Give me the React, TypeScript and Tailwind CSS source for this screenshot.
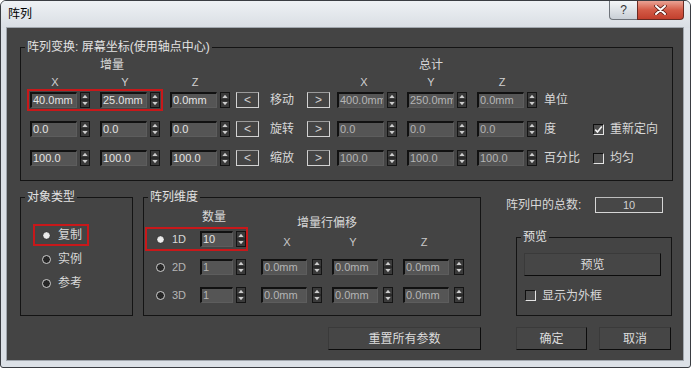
import React from "react";

const INP =
  "h-[16px] bg-[#555555] border-t-2 border-l-2 border-b border-r border-t-[#111111] border-l-[#111111] border-b-[#5d5d5d] border-r-[#5d5d5d] text-[11px] leading-[13px] pl-[1px] overflow-hidden whitespace-nowrap";

function Spinner({ cls = "" }: { cls?: string }) {
  return (
    <svg className={`shrink-0 ${cls}`} width="10" height="16" viewBox="0 0 10 16">
      <rect x="0.5" y="0.5" width="9" height="15" fill="#3a3a3a" stroke="#141414" />
      <line x1="1" y1="8" x2="9" y2="8" stroke="#1a1a1a" />
      <path d="M5 2.8 L7.6 6 L2.4 6 Z" fill="#cdcdcd" />
      <path d="M5 13.2 L7.6 10 L2.4 10 Z" fill="#cdcdcd" />
    </svg>
  );
}

function Field({
  v,
  w = "w-[47px]",
  gap = "ml-[3px]",
  dim = false,
  cls = "",
}: {
  v: string;
  w?: string;
  gap?: string;
  dim?: boolean;
  cls?: string;
}) {
  return (
    <div className={`flex items-center shrink-0 ${cls}`}>
      <div className={`${INP} ${w} ${dim ? "text-[#b4b4b4]" : "text-[#e4e4e4]"}`}>{v}</div>
      <Spinner cls={gap} />
    </div>
  );
}

function Radio({ on }: { on: boolean }) {
  return (
    <svg className="shrink-0" width="9" height="9" viewBox="0 0 9 9">
      {on ? (
        <>
          <circle cx="4.5" cy="4.5" r="4" fill="#cfcfcf" stroke="#262626" />
          <circle cx="4.5" cy="4.5" r="2.6" fill="#ececec" />
        </>
      ) : (
        <circle cx="4.5" cy="4.5" r="4" fill="#262626" stroke="#cfcfcf" />
      )}
    </svg>
  );
}

function Check({ on }: { on: boolean }) {
  return (
    <div className="w-[11px] h-[11px] shrink-0 bg-[#4e4e4e] border border-t-[#0f0f0f] border-l-[#0f0f0f] border-b-[#e4e4e4] border-r-[#e4e4e4] flex items-center justify-center">
      {on && (
        <svg width="9" height="9" viewBox="0 0 9 9">
          <path d="M1.2 4.6 L3.5 7 L7.8 1.6" fill="none" stroke="#f0f0f0" strokeWidth="1.6" />
        </svg>
      )}
    </div>
  );
}

function ArrowBtn({ t }: { t: string }) {
  return (
    <div className="h-[16px] w-[23px] shrink-0 border border-[#d2d2d2] border-t-[#9a9a9a] text-[12px] leading-none text-[#d0d0d0] flex items-center justify-center">
      {t}
    </div>
  );
}

const LEG = "ml-[4px] px-[2px] text-[12px] leading-[14px] text-[#e2e2e2]";
const BTN =
  "h-[23px] bg-[#464646] border border-t-[#3a3a3a] border-l-[#3a3a3a] border-b-[#0c0c0c] border-r-[#0c0c0c] text-[12px] text-[#dcdcdc] flex items-center justify-center shrink-0";

const rows = [
  {
    inc: ["40.0mm", "25.0mm", "0.0mm"],
    label: "移动",
    tot: ["400.0mm", "250.0mm", "0.0mm"],
    unit: "单位",
    red: true,
    cb: null as null | { on: boolean; t: string },
  },
  {
    inc: ["0.0", "0.0", "0.0"],
    label: "旋转",
    tot: ["0.0", "0.0", "0.0"],
    unit: "度",
    red: false,
    cb: { on: true, t: "重新定向" },
  },
  {
    inc: ["100.0", "100.0", "100.0"],
    label: "缩放",
    tot: ["100.0", "100.0", "100.0"],
    unit: "百分比",
    red: false,
    cb: { on: false, t: "均匀" },
  },
];

export default function App() {
  return (
    <div className="w-[691px] h-[368px] bg-[#dce1e7] border border-[#3a3d42] rounded-t-[6px] rounded-b-[3px] flex flex-col overflow-hidden font-['Liberation_Sans','Noto_Sans_CJK_SC',sans-serif] select-none">
      {/* Title bar */}
      <div className="h-[27px] shrink-0 flex items-start justify-between bg-gradient-to-b from-[#eef1f4] to-[#d9dee4]">
        <div className="mt-[6px] pl-[7px] text-[12px] leading-[14px] text-black">阵列</div>
        <div className="flex mr-[6px]">
          <div className="w-[28px] h-[19px] border border-r-0 border-t-0 border-[#6f747b] rounded-bl-[4px] bg-gradient-to-b from-[#f4f6f8] to-[#c9cfd6] flex items-center justify-center text-[12px] text-[#333] leading-none">
            ?
          </div>
          <div className="w-[47px] h-[19px] border border-t-0 border-[#6a2a22] rounded-br-[4px] bg-gradient-to-b from-[#e9a294] via-[#d35a46] to-[#c23f2d] flex items-center justify-center">
            <svg width="13" height="10" viewBox="0 0 13 10">
              <path d="M2 1 L11 9 M11 1 L2 9" stroke="#5a1f18" strokeWidth="3.6" strokeLinecap="round" />
              <path d="M2 1 L11 9 M11 1 L2 9" stroke="#ffffff" strokeWidth="2" strokeLinecap="round" />
            </svg>
          </div>
        </div>
      </div>

      {/* Content */}
      <div className="ml-[6px] w-[676px] h-[332px] bg-[#444444] shadow-[0_0_0_1px_#a1a7ae] flex flex-col text-[#d8d8d8]">
        {/* Top group */}
        <fieldset className="mt-[12px] ml-[13px] w-[653px] h-[141px] border border-[#141414]">
          <legend className={LEG}>阵列变换: 屏幕坐标(使用轴点中心)</legend>
          <div className="flex flex-col">
            <div className="mt-[4px] h-[14px] flex text-[12px] leading-[14px]">
              <div className="w-[182px] text-center">增量</div>
              <div className="w-[456px] text-center">总计</div>
            </div>
            <div className="mt-[3px] h-[14px] flex text-[11px] leading-[14px] text-[#d0d0d0]">
              <div className="w-[68px] text-center">X</div>
              <div className="w-[72px] text-center">Y</div>
              <div className="w-[68px] text-center">Z</div>
              <div className="w-[101px]" />
              <div className="w-[68px] text-center">X</div>
              <div className="w-[66px] text-center">Y</div>
              <div className="w-[76px] text-center">Z</div>
            </div>
            {rows.map((r, i) => (
              <div key={i} className={`h-[22px] flex items-center ${i > 0 ? "mt-[7px]" : ""}`}>
                <div
                  className={`ml-[6px] w-[136px] h-[22px] border-2 flex items-center pl-[1px] shrink-0 ${
                    r.red ? "border-[#c8181a]" : "border-transparent"
                  }`}
                >
                  <Field v={r.inc[0]} />
                  <Field v={r.inc[1]} cls="ml-[10px]" />
                </div>
                <Field v={r.inc[2]} cls="ml-[7px]" />
                <div className="ml-[6px]">
                  <ArrowBtn t="<" />
                </div>
                <div className="ml-[11px] w-[37px] text-[12px] leading-[14px] shrink-0">{r.label}</div>
                <ArrowBtn t=">" />
                <Field v={r.tot[0]} dim cls="ml-[7px]" />
                <Field v={r.tot[1]} dim cls="ml-[10px]" />
                <Field v={r.tot[2]} dim cls="ml-[10px]" />
                <div className="ml-[7px] w-[49px] text-[12px] leading-[14px] shrink-0">{r.unit}</div>
                {r.cb && (
                  <div className="flex items-center">
                    <Check on={r.cb.on} />
                    <div className="ml-[6px] text-[12px] leading-[14px]">{r.cb.t}</div>
                  </div>
                )}
              </div>
            ))}
          </div>
        </fieldset>

        {/* Bottom groups */}
        <div className="mt-[9px] ml-[13px] flex items-start">
          {/* Object type */}
          <fieldset className="w-[113px] h-[126px] border border-[#141414] shrink-0">
            <legend className={LEG}>对象类型</legend>
            <div className="mt-[20px] ml-[12px] flex flex-col gap-[2px]">
              {[
                ["复制", true],
                ["实例", false],
                ["参考", false],
              ].map(([t, on], i) => (
                <div
                  key={i}
                  className={`w-[56px] h-[22px] border-2 flex items-center pl-[7px] ${
                    i === 0 ? "border-[#c8181a]" : "border-transparent"
                  }`}
                >
                  <Radio on={on as boolean} />
                  <div className="ml-[7px] text-[12px] leading-[14px]">{t as string}</div>
                </div>
              ))}
            </div>
          </fieldset>

          {/* Array dimensions */}
          <fieldset className="ml-[10px] w-[338px] h-[126px] border border-[#141414] shrink-0">
            <legend className={LEG}>阵列维度</legend>
            <div className="flex items-start">
              <div className="ml-[1px] w-[103px] flex flex-col shrink-0">
                <div className="mt-[6px] h-[14px] pl-[57px] text-[12px] leading-[14px]">数量</div>
                {[
                  ["1D", "10", true],
                  ["2D", "1", false],
                  ["3D", "1", false],
                ].map(([d, n, on], i) => (
                  <div
                    key={i}
                    className={`h-[24px] w-[103px] border-2 flex items-center pl-[9px] ${
                      i === 0 ? "mt-[3px] border-[#c8181a]" : "mt-[4px] border-transparent"
                    }`}
                  >
                    <Radio on={on as boolean} />
                    <div
                      className={`ml-[7px] w-[28px] text-[11px] leading-[14px] shrink-0 ${
                        on ? "text-[#d8d8d8]" : "text-[#b5b5b5]"
                      }`}
                    >
                      {d as string}
                    </div>
                    <Field v={n as string} w="w-[33px]" dim={!on} />
                  </div>
                ))}
              </div>
              <div className="ml-[13px] flex flex-col">
                <div className="mt-[12px] h-[14px] pl-[36px] text-[12px] leading-[14px]">增量行偏移</div>
                <div className="mt-[5px] h-[14px] flex text-[11px] leading-[14px] text-[#c8c8c8]">
                  <div className="w-[52px] text-center">X</div>
                  <div className="w-[80px] text-center">Y</div>
                  <div className="w-[62px] text-center">Z</div>
                </div>
                {[0, 1].map((i) => (
                  <div key={i} className={`h-[24px] flex items-center ${i === 0 ? "mt-[6px]" : "mt-[4px]"}`}>
                    <Field v="0.0mm" w="w-[46px]" gap="ml-[5px]" dim />
                    <Field v="0.0mm" w="w-[46px]" gap="ml-[5px]" dim cls="ml-[10px]" />
                    <Field v="0.0mm" w="w-[46px]" gap="ml-[5px]" dim cls="ml-[10px]" />
                  </div>
                ))}
              </div>
            </div>
          </fieldset>

          {/* Right column */}
          <div className="ml-[25px] mt-[7px] flex flex-col">
            <div className="h-[16px] flex items-center">
              <div className="w-[89px] text-[12px] leading-[14px]">阵列中的总数:</div>
              <div className="w-[68px] h-[16px] bg-[#474747] border border-[#d6d6d6] border-t-[#bdbdbd] text-[11px] leading-[14px] text-[#d0d0d0] text-center">
                10
              </div>
            </div>
            <fieldset className="mt-[17px] ml-[10px] w-[156px] h-[86px] border border-[#141414]">
              <legend className={LEG}>预览</legend>
              <div className="flex flex-col">
                <div className={`${BTN} mt-[9px] ml-[7px] w-[137px]`}>预览</div>
                <div className="mt-[13px] ml-[8px] h-[13px] flex items-center">
                  <Check on={false} />
                  <div className="ml-[6px] text-[12px] leading-[14px]">显示为外框</div>
                </div>
              </div>
            </fieldset>
          </div>
        </div>

        {/* Bottom buttons */}
        <div className="mt-[11px] pl-[321px] flex">
          <div className={`${BTN} w-[153px]`}>重置所有参数</div>
          <div className={`${BTN} ml-[35px] w-[71px]`}>确定</div>
          <div className={`${BTN} ml-[12px] w-[72px]`}>取消</div>
        </div>
      </div>
    </div>
  );
}
